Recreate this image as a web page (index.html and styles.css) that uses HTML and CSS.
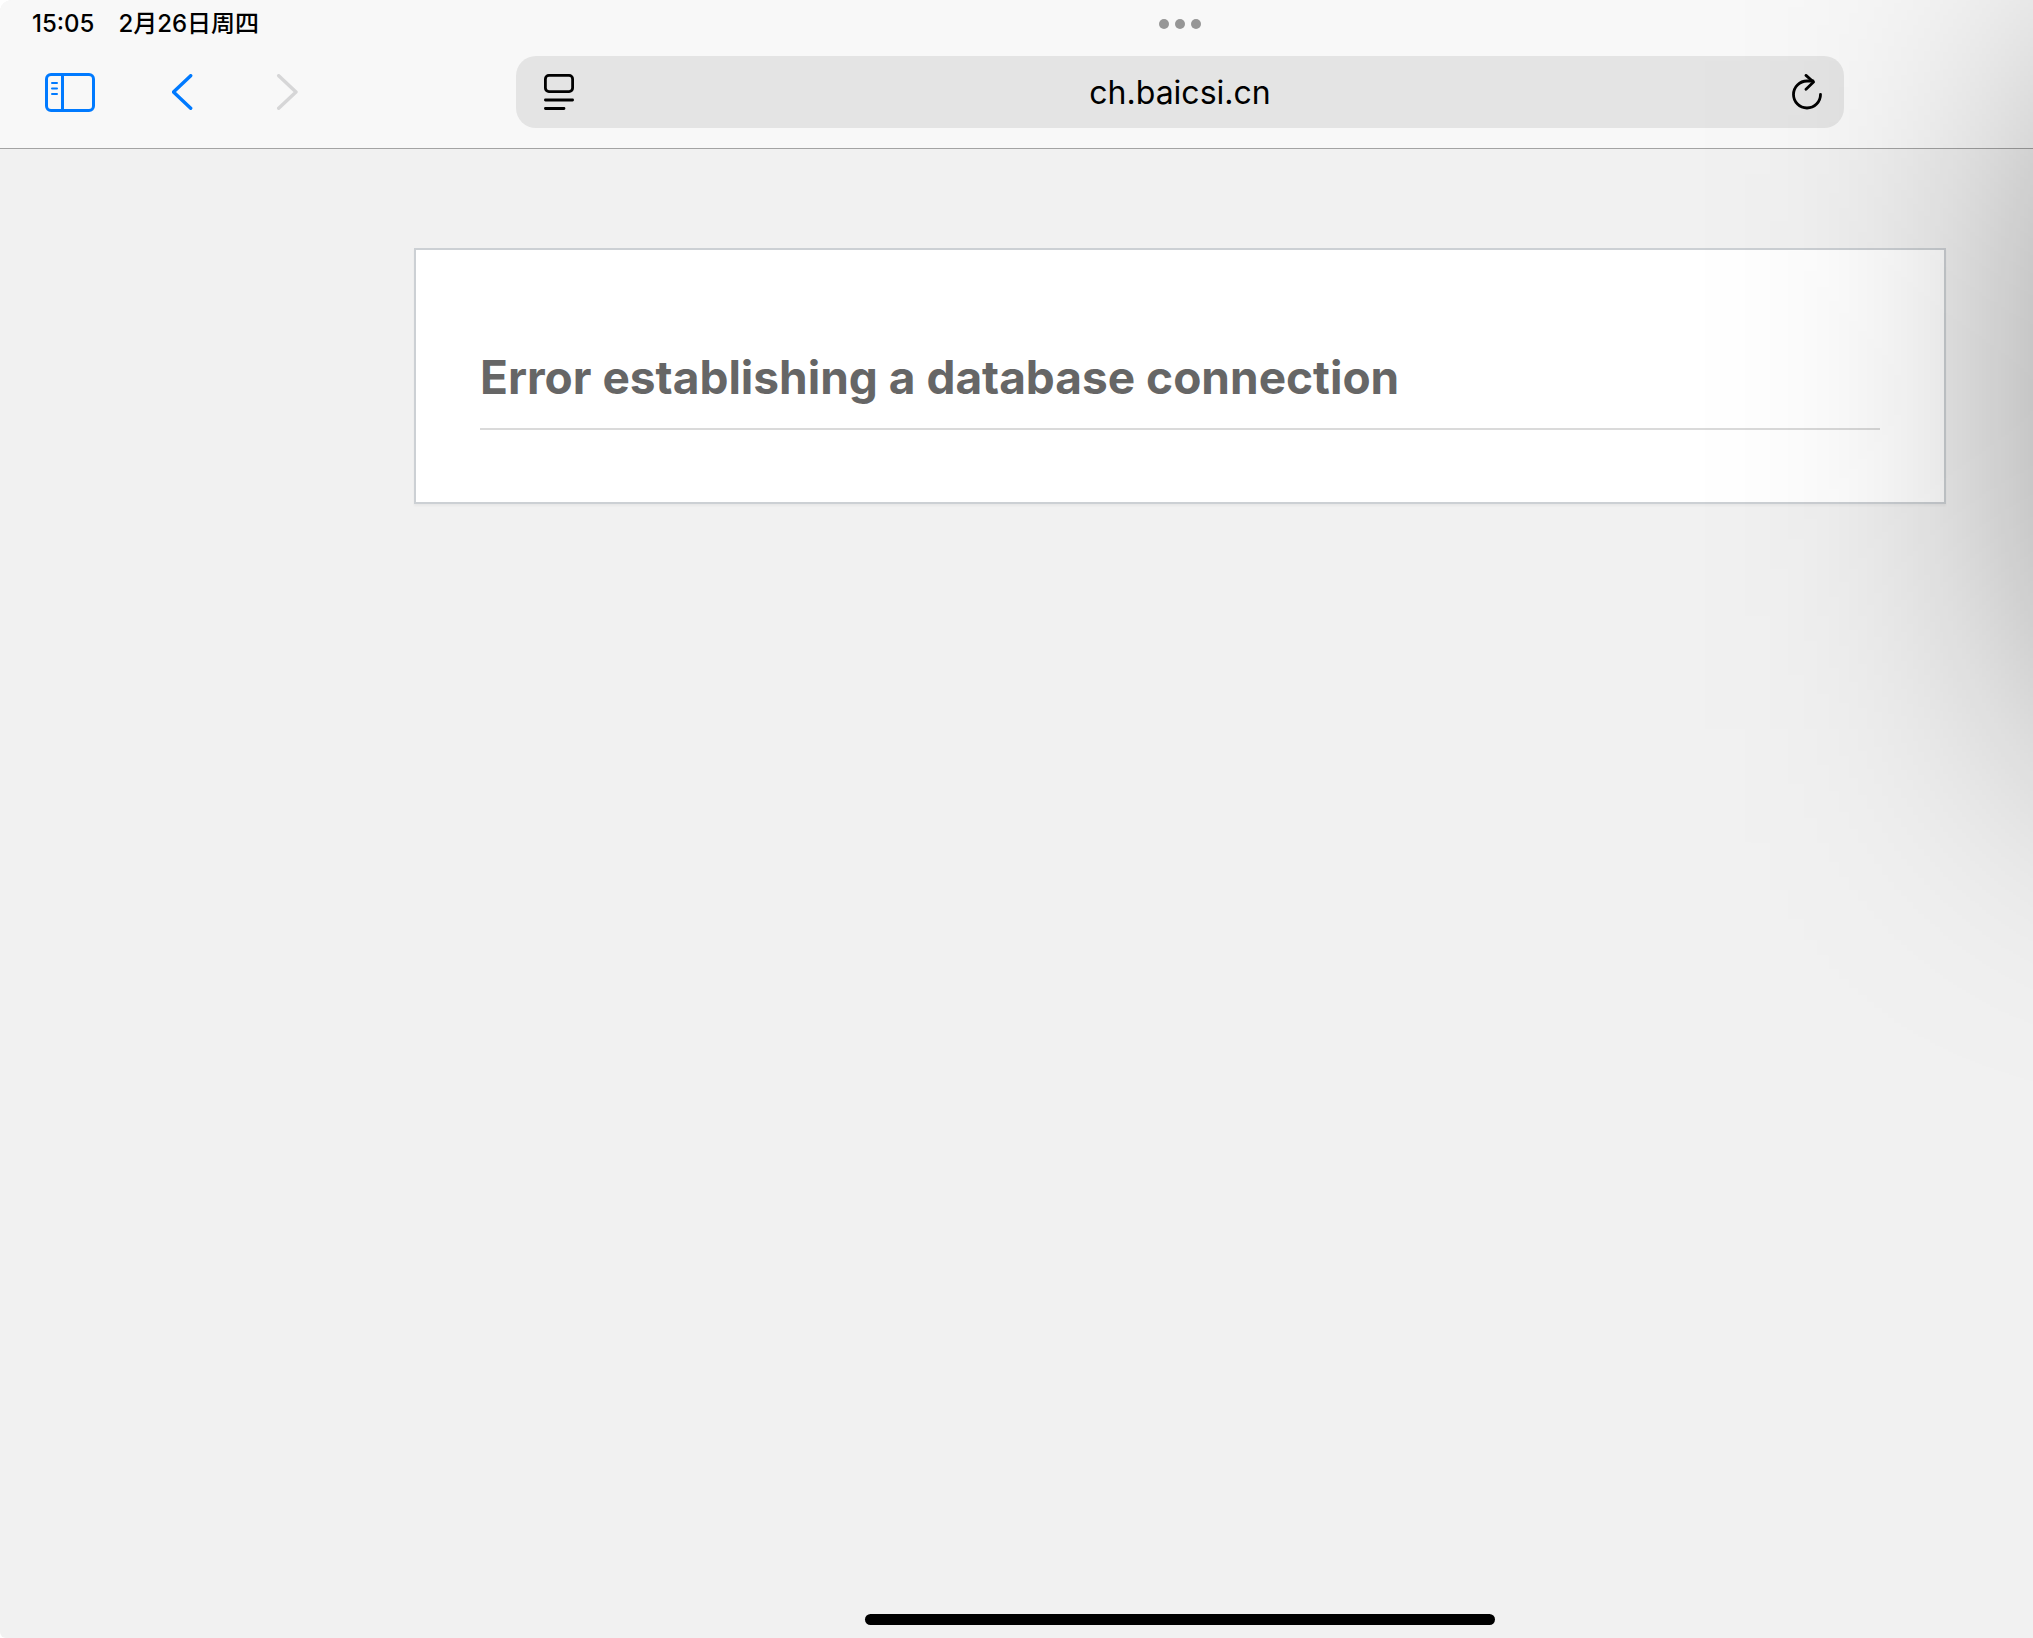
FILE: index.html
```html
<!DOCTYPE html>
<html lang="zh-CN">
<head>
    <meta charset="UTF-8">
    <meta name="viewport" content="width=device-width, initial-scale=1.0">
    <title>Database Error</title>
    <link rel="stylesheet" href="styles.css">
</head>
<body>
    <div class="screen">
        <header class="browser">
            <div class="status">
                <time>15:05</time>
                <span>2月26日周四</span>
            </div>
            <button class="dots" aria-label="多任务">
                <svg width="42" height="10" viewBox="0 0 42 10" fill="#969696">
                    <circle cx="5" cy="5" r="5"/>
                    <circle cx="21" cy="5" r="5"/>
                    <circle cx="37" cy="5" r="5"/>
                </svg>
            </button>

            <nav class="nav">
                <button aria-label="边栏">
                    <svg width="50" height="39" viewBox="0 0 50 39" fill="none" stroke="#007aff" stroke-width="3" stroke-linecap="round">
                        <rect x="1.5" y="1.5" width="47" height="36" rx="4.5"/>
                        <path d="M17.5 2v35" stroke-linecap="butt"/>
                        <path d="M7 10h5M7 15.5h5M7 21h5" stroke-width="2"/>
                    </svg>
                </button>
                <button aria-label="后退">
                    <svg width="26" height="36" viewBox="0 0 26 36" fill="none" stroke="#007aff" stroke-width="3.4" stroke-linecap="round" stroke-linejoin="round">
                        <path d="M18.7 1.7L1.5 18L18.7 34.3"/>
                    </svg>
                </button>
                <button aria-label="前进" disabled>
                    <svg width="26" height="36" viewBox="0 0 26 36" fill="none" stroke="#d6d6d7" stroke-width="3.4" stroke-linecap="round" stroke-linejoin="round">
                        <path d="M3.7 1.7L21 18L3.7 34.3"/>
                    </svg>
                </button>
            </nav>

            <form class="address">
                <button type="button" aria-label="页面菜单">
                    <svg width="30" height="36" viewBox="0 0 30 36" fill="none" stroke="#000" stroke-width="2.8" stroke-linecap="round">
                        <rect x="1.4" y="1.4" width="27.2" height="16.2" rx="3.5"/>
                        <path d="M1.4 26h27.2M1.4 34.5h18.6"/>
                    </svg>
                </button>
                <input type="text" value="ch.baicsi.cn" aria-label="网址">
                <button type="button" aria-label="重新载入">
                    <svg width="36" height="36" viewBox="-6 0 36 36" fill="none" stroke="#000" stroke-width="2.8" stroke-linecap="round" stroke-linejoin="round">
                        <path d="M28.5 20.5A13.5 13.5 0 1 1 15 7H21"/>
                        <path d="M14 1.4L21.5 8L14 15.3"/>
                    </svg>
                </button>
            </form>
        </header>

        <main class="page">
            <div class="error">
                <h1>Error establishing a database connection</h1>
            </div>
        </main>

        <footer class="bottom">
            <div class="home-bar"></div>
        </footer>

        <!-- shadow of the window parked past the right edge -->
        <div class="side-shadow"></div>
    </div>
</body>
</html>
```

FILE: styles.css
```css
* {
    box-sizing: border-box;
}

body {
    margin: 0;
    background-color: #fff;
    font-family: Inter, "Noto Sans CJK SC", sans-serif;
}

button {
    display: flex;
    padding: 0;
    border: none;
    background: none;
}

.screen {
    position: relative;
    display: flex;
    flex-direction: column;
    min-height: 100vh;
    border-radius: 12px 0 0 6px;
    background-color: #f1f1f1;
    overflow: hidden;
}

/* status row + toolbar row, the address bar takes the middle column */
.browser,
.bottom {
    display: grid;
    grid-template-columns: 516px 1fr 189px;
}

.browser {
    grid-template-rows: 48px 80px;
    padding-bottom: 20px;
    border-bottom: 1px solid #a3a3a3;
    background-color: #f8f8f8;
}

.status {
    display: flex;
    align-items: center;
    gap: 24px;
    padding-left: 32px;
    font-size: 24px;
    line-height: 48px;
    font-weight: 500;
    color: #000;
}

.dots {
    justify-self: center;
    align-self: center;
}

.nav {
    grid-column: 1;
    display: flex;
    align-items: center;
    gap: 77px;
    padding: 8px 0 0 45px;
}

.address {
    display: flex;
    align-items: center;
    height: 72px;
    margin-top: 8px;
    padding: 0 22px 0 28px;
    border-radius: 20px;
    background-color: #e4e4e4;
}

.address input {
    flex: 1;
    min-width: 0;
    padding: 2px 0 0;
    border: none;
    outline: none;
    background: none;
    font-family: inherit;
    font-size: 32px;
    line-height: 40px;
    text-align: center;
    color: #000;
}

.page {
    flex: 1;
    padding: 99px 87px 0 414px;
}

/* the WordPress error box */
.error {
    padding: 98px 64px 72px;
    border: 2px solid #ccd0d4;
    background-color: #fff;
    box-shadow: 0 2px 2px rgba(0, 0, 0, 0.04);
}

.error h1 {
    margin: 0;
    padding-bottom: 22px;
    border-bottom: 2px solid #dadada;
    font-size: 46px;
    line-height: 58px;
    font-weight: 700;
    color: #666;
}

.bottom {
    padding-bottom: 13px;
}

.home-bar {
    grid-column: 2;
    justify-self: center;
    width: 630px;
    height: 11px;
    border-radius: 6px;
    background-color: #000;
}

.side-shadow {
    position: absolute;
    top: 60px;
    left: calc(100% + 60px);
    width: 800px;
    height: 670px;
    background-color: rgba(0, 0, 0, 0.5);
    filter: blur(170px);
    pointer-events: none;
}
```
